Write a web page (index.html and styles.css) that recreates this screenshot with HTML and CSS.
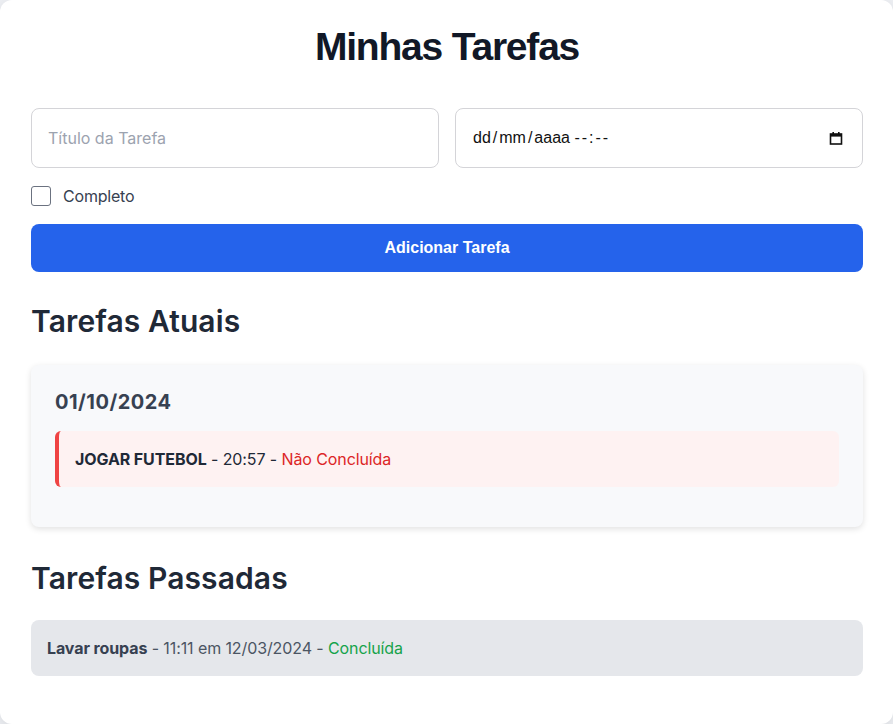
FILE: index.html
```html
<!DOCTYPE html>
<html lang="pt-BR">
<head>
<meta charset="utf-8">
<title>Minhas Tarefas</title>
<link rel="stylesheet" href="styles.css">
</head>
<body>
<div class="container">
  <h1 class="title">Minhas Tarefas</h1>
  <form class="form">
    <div class="fields">
      <input class="field" type="text" placeholder="Título da Tarefa">
      <div class="field date-field">
        <span class="date-text">dd<span class="sep">/</span>mm<span class="sep">/</span>aaaa <span class="time">--:--</span></span>
        <svg class="cal-icon" width="14" height="14" viewBox="0 0 14 14" aria-hidden="true">
          <rect x="1.5" y="3" width="11" height="10" fill="none" stroke="#111" stroke-width="1.6"/>
          <rect x="1.5" y="3" width="11" height="2.6" fill="#111"/>
          <rect x="3.4" y="1" width="1.6" height="2.5" fill="#111"/>
          <rect x="9" y="1" width="1.6" height="2.5" fill="#111"/>
        </svg>
      </div>
    </div>
    <label class="check-row">
      <span class="checkbox"></span>
      <span class="check-label">Completo</span>
    </label>
    <button class="btn" type="button">Adicionar Tarefa</button>
  </form>

  <h2 class="section-title current-title">Tarefas Atuais</h2>
  <div class="day-card">
    <h3 class="day-date">01/10/2024</h3>
    <div class="task task-pending">
      <strong>JOGAR FUTEBOL</strong> - 20:57 - <span class="status-pending">Não Concluída</span>
    </div>
  </div>

  <h2 class="section-title past-title">Tarefas Passadas</h2>
  <div class="task task-past">
    <strong>Lavar roupas</strong> - 11:11 em 12/03/2024 - <span class="status-done">Concluída</span>
  </div>
</div>
</body>
</html>
```

FILE: styles.css
```css
* { box-sizing: border-box; }

html, body {
  margin: 0;
  padding: 0;
  background: #eceef2;
}

body {
  font-family: Inter, "Noto Sans", sans-serif;
  color: #1f2937;
}

.container {
  background: #ffffff;
  min-height: 724px;
  border-radius: 12px;
  box-shadow: 0 4px 12px rgba(0, 0, 0, 0.08);
  padding: 23px 30px 40px 31px;
}

.title {
  margin: 0;
  text-align: center;
  font-family: "Liberation Sans", Arial, sans-serif;
  font-weight: 700;
  font-size: 39px;
  line-height: 48px;
  letter-spacing: -1.2px;
  color: #111827;
}

.form {
  margin-top: 37px;
  display: flex;
  flex-direction: column;
}

.fields {
  display: grid;
  grid-template-columns: 1fr 1fr;
  gap: 16px;
}

.field {
  height: 60px;
  border: 1px solid #d4d4d8;
  border-radius: 8px;
  padding: 0 16px;
  font-family: Inter, "Noto Sans", sans-serif;
  font-size: 16px;
  color: #1f2937;
  background: #fff;
  outline: none;
}

.field::placeholder {
  color: #9ca3af;
}

.date-field {
  display: flex;
  align-items: center;
  justify-content: space-between;
  padding: 0 19px 0 17px;
}

.date-text {
  font-family: "Liberation Sans", Arial, sans-serif;
  font-size: 16px;
  color: #111;
  white-space: pre;
}

.date-text .sep {
  padding: 0 2px;
}

.date-text .time {
  letter-spacing: 2px;
}

.cal-icon {
  display: block;
}

.check-row {
  margin-top: 16px;
  height: 24px;
  display: flex;
  align-items: center;
  gap: 12px;
}

.checkbox {
  width: 20px;
  height: 20px;
  border: 1.5px solid #6b7280;
  border-radius: 3px;
  background: #fff;
}

.check-label {
  font-size: 16px;
  color: #374151;
  letter-spacing: -0.2px;
}

.btn {
  margin-top: 16px;
  height: 48px;
  border: none;
  border-radius: 8px;
  background: #2563eb;
  color: #ffffff;
  font-family: "Liberation Sans", Arial, sans-serif;
  font-weight: 700;
  font-size: 16px;
}

.section-title {
  margin: 0;
  font-size: 30px;
  line-height: 36px;
  font-weight: 600;
  color: #1f2937;
  letter-spacing: 0.1px;
}

.current-title { margin-top: 31px; }
.past-title { margin-top: 33px; }

.day-card {
  margin-top: 26px;
  background: #f8f9fb;
  border-radius: 8px;
  box-shadow: 0 2px 6px rgba(0, 0, 0, 0.12);
  padding: 24px 24px 24px 24px;
}

.day-date {
  margin: 0;
  font-size: 20px;
  line-height: 27px;
  font-weight: 700;
  color: #374151;
  letter-spacing: 0.5px;
}

.task {
  font-size: 16px;
  line-height: 24px;
  padding: 16px;
  letter-spacing: -0.1px;
}

.task strong {
  font-weight: 700;
}

.task-pending {
  margin-top: 15px;
  margin-bottom: 16px;
  background: #fef2f2;
  border-left: 4px solid #ef4444;
  border-radius: 6px;
  padding-left: 16px;
  color: #1f2937;
}

.status-pending { color: #dc2626; }

.task-past {
  margin-top: 24px;
  background: #e5e7eb;
  border-radius: 8px;
  color: #4b5563;
}

.task-past strong { color: #374151; }

.status-done { color: #16a34a; }
```
